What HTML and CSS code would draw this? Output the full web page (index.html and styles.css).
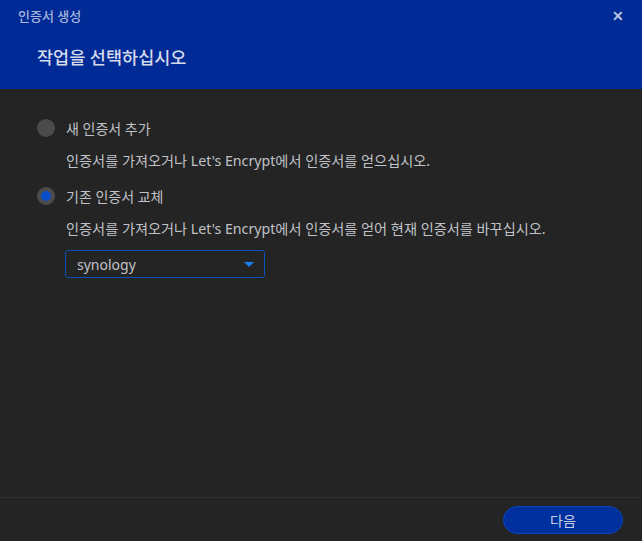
FILE: index.html
```html
<!DOCTYPE html>
<html lang="ko">
<head>
  <meta charset="UTF-8">
  <title>인증서 생성</title>
  <link rel="stylesheet" href="styles.css">
</head>
<body>
  <div class="dialog">
    <div class="header">
      <div class="titlebar">
        <span class="title">인증서 생성</span>
        <span class="close">✕</span>
      </div>
      <h1>작업을 선택하십시오</h1>
    </div>

    <div class="content">
      <div class="option">
        <span class="radio"></span>
        <span class="label">새 인증서 추가</span>
      </div>
      <p class="desc">인증서를 가져오거나 Let's Encrypt에서 인증서를 얻으십시오.</p>

      <div class="option">
        <span class="radio checked"></span>
        <span class="label">기존 인증서 교체</span>
      </div>
      <p class="desc">인증서를 가져오거나 Let's Encrypt에서 인증서를 얻어 현재 인증서를 바꾸십시오.</p>

      <div class="select">
        <span>synology</span>
        <span class="caret"></span>
      </div>
    </div>

    <div class="footer">
      <button class="next">다음</button>
    </div>
  </div>
</body>
</html>
```

FILE: styles.css
```css
body {
  margin: 0;
  background-color: #242424;
  font-family: "Noto Sans", "Noto Sans CJK KR", sans-serif;
  color: #c0c2c8;
}
.dialog {
  width: 642px;
  height: 541px;
  display: flex;
  flex-direction: column;
}
.header {
  background-color: #002a96;
  height: 89px;
  padding: 0 18px;
  box-sizing: border-box;
}
.titlebar {
  display: flex;
  justify-content: space-between;
  align-items: center;
  height: 30px;
}
.title {
  font-size: 13px;
  color: #a9b6dc;
  font-weight: 500;
}
.close {
  font-size: 14px;
  font-weight: bold;
  color: #b9c4e6;
}
h1 {
  margin: 15px 0 0 19px;
  font-size: 17.5px;
  line-height: 24px;
  font-weight: 500;
  color: #d6dbe9;
}
.content {
  flex: 1;
  padding: 30px 0 0 37px;
}
.option {
  display: flex;
  align-items: center;
  height: 18px;
}
.radio {
  width: 18px;
  height: 18px;
  border-radius: 50%;
  background-color: #4b4b4b;
  margin-right: 11px;
  display: flex;
  align-items: center;
  justify-content: center;
}
.radio.checked::after {
  content: "";
  width: 10px;
  height: 10px;
  border-radius: 50%;
  background-color: #0a4fc8;
}
.label {
  font-size: 14px;
}
.desc {
  margin: 14px 0 17px 29px;
  font-size: 14.2px;
  line-height: 19px;
}
.select {
  margin: -5px 0 0 28px;
  width: 200px;
  height: 28px;
  box-sizing: border-box;
  border: 1px solid #0b4fbd;
  border-radius: 3px;
  display: flex;
  align-items: center;
  justify-content: space-between;
  padding: 0 10px 0 11px;
  font-size: 14px;
}
.caret {
  width: 0;
  height: 0;
  border-left: 5px solid transparent;
  border-right: 5px solid transparent;
  border-top: 5px solid #1a7ff0;
}
.footer {
  border-top: 1px solid #2c3038;
  height: 43px;
  display: flex;
  justify-content: flex-end;
  align-items: center;
  padding-right: 19px;
}
.next {
  width: 120px;
  height: 28px;
  border-radius: 14px;
  background-color: #00309e;
  border: 1px solid #0a47c0;
  color: #c8cfe4;
  font-family: "Noto Sans", "Noto Sans CJK KR", sans-serif;
  font-size: 14px;
}
```
